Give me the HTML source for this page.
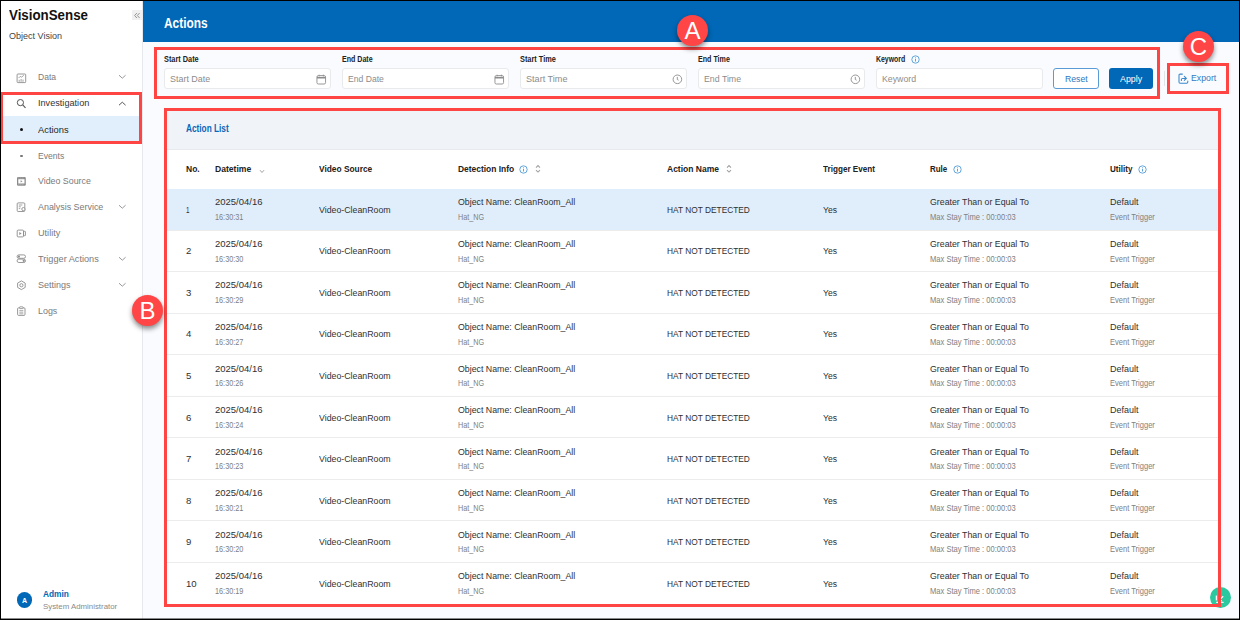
<!DOCTYPE html>
<html><head><meta charset="utf-8"><style>
html,body{margin:0;padding:0;width:1240px;height:620px;overflow:hidden;background:#fff;font-family:"Liberation Sans", sans-serif}
.t{position:absolute;white-space:nowrap;line-height:1}
</style></head><body>
<div style="position:absolute;left:143px;top:42px;width:1097px;height:578px;background:#f9fbfe"></div>
<div style="position:absolute;left:0px;top:0px;width:142px;height:620px;background:#fff"></div>
<div style="position:absolute;left:142px;top:0px;width:1px;height:620px;background:#e6e8eb"></div>
<div style="position:absolute;left:143px;top:0px;width:1097px;height:42px;background:#0068b7"></div>
<div class="t" style="left:164.40px;top:16.00px;font-size:14px;color:#fff;font-weight:700;transform:scaleX(0.8478);transform-origin:0 0;">Actions</div>
<div style="position:absolute;left:132px;top:9.5px;width:10px;height:10.5px;background:#f0f0f0"></div>
<svg style="position:absolute;left:133px;top:11.5px" width="8" height="7" viewBox="0 0 8 7"><path d="M3.9 1 L1.6 3.5 L3.9 6 M6.6 1 L4.3 3.5 L6.6 6" fill="none" stroke="#8c8c8c" stroke-width=".9"/></svg>
<div class="t" style="left:8.90px;top:8.18px;font-size:14.5px;color:#111;font-weight:700;transform:scaleX(0.9188);transform-origin:0 0;">VisionSense</div>
<div class="t" style="left:8.90px;top:31.69px;font-size:8.6px;color:#444;font-weight:400;transform:scaleX(1.0490);transform-origin:0 0;">Object Vision</div>
<div style="position:absolute;left:0px;top:116px;width:142px;height:26px;background:#e1effc"></div>
<div class="t" style="left:37.80px;top:72.42px;font-size:9.5px;color:#7a7a7a;font-weight:400;transform:scaleX(0.9008);transform-origin:0 0;">Data</div>
<svg style="position:absolute;left:118.3px;top:74.4px" width="9" height="6" viewBox="0 0 9 6"><path d="M1 1.2 L4.3 4.2 L7.6 1.2" fill="none" stroke="#999" stroke-width="1"/></svg>
<div class="t" style="left:37.80px;top:98.03px;font-size:9.5px;color:#333333;font-weight:400;transform:scaleX(0.9617);transform-origin:0 0;">Investigation</div>
<svg style="position:absolute;left:118.3px;top:100.70000000000002px" width="9" height="6" viewBox="0 0 9 6"><path d="M1 4.2 L4.3 1.2 L7.6 4.2" fill="none" stroke="#555" stroke-width="1"/></svg>
<div class="t" style="left:37.80px;top:124.82px;font-size:9.5px;color:#262626;font-weight:400;transform:scaleX(0.9820);transform-origin:0 0;">Actions</div>
<div class="t" style="left:37.80px;top:150.72px;font-size:9.5px;color:#7a7a7a;font-weight:400;transform:scaleX(0.9027);transform-origin:0 0;">Events</div>
<div class="t" style="left:37.80px;top:176.32px;font-size:9.5px;color:#7a7a7a;font-weight:400;transform:scaleX(0.9286);transform-origin:0 0;">Video Source</div>
<div class="t" style="left:37.80px;top:202.32px;font-size:9.5px;color:#7a7a7a;font-weight:400;transform:scaleX(0.9371);transform-origin:0 0;">Analysis Service</div>
<svg style="position:absolute;left:118.3px;top:204.29999999999998px" width="9" height="6" viewBox="0 0 9 6"><path d="M1 1.2 L4.3 4.2 L7.6 1.2" fill="none" stroke="#999" stroke-width="1"/></svg>
<div class="t" style="left:37.80px;top:228.12px;font-size:9.5px;color:#7a7a7a;font-weight:400;transform:scaleX(0.9601);transform-origin:0 0;">Utility</div>
<div class="t" style="left:37.80px;top:254.23px;font-size:9.5px;color:#7a7a7a;font-weight:400;transform:scaleX(0.9646);transform-origin:0 0;">Trigger Actions</div>
<svg style="position:absolute;left:118.3px;top:256.2px" width="9" height="6" viewBox="0 0 9 6"><path d="M1 1.2 L4.3 4.2 L7.6 1.2" fill="none" stroke="#999" stroke-width="1"/></svg>
<div class="t" style="left:37.80px;top:280.23px;font-size:9.5px;color:#7a7a7a;font-weight:400;transform:scaleX(0.9493);transform-origin:0 0;">Settings</div>
<svg style="position:absolute;left:118.3px;top:282.2px" width="9" height="6" viewBox="0 0 9 6"><path d="M1 1.2 L4.3 4.2 L7.6 1.2" fill="none" stroke="#999" stroke-width="1"/></svg>
<div class="t" style="left:37.80px;top:306.23px;font-size:9.5px;color:#7a7a7a;font-weight:400;transform:scaleX(0.9362);transform-origin:0 0;">Logs</div>
<div style="position:absolute;left:20.3px;top:127.8px;width:3px;height:3px;background:#111;border-radius:50%"></div>
<div style="position:absolute;left:20.4px;top:154.5px;width:2.6px;height:2.6px;background:#777;border-radius:50%"></div>
<svg style="position:absolute;left:15.9px;top:72.5px" width="11" height="11" viewBox="0 0 11 11"><rect x="1.1" y="1" width="8.6" height="8.6" rx="0.8" fill="none" stroke="#8c8c8c" stroke-width="0.9"/><path d="M2.6 5 L4.2 3.4 L5.6 4.1 L7.8 2.3" fill="none" stroke="#8c8c8c" stroke-width=".8"/><path d="M3.2 8.8V6.8M5.1 8.8V6M7 8.8V6.6" stroke="#8c8c8c" stroke-width=".8"/></svg>
<svg style="position:absolute;left:15.9px;top:98px" width="11" height="11" viewBox="0 0 11 11"><circle cx="4.4" cy="4.6" r="3.1" fill="none" stroke="#555" stroke-width="1"/><path d="M6.7 6.9 L9.5 9.8" stroke="#555" stroke-width="1.1"/></svg>
<svg style="position:absolute;left:15.9px;top:176px" width="11" height="11" viewBox="0 0 11 11"><rect x="1" y="0.9" width="8.8" height="8.9" rx="1.2" fill="#8c8c8c"/><rect x="2.3" y="3.2" width="6.2" height="4.3" fill="#fff"/><path d="M4.6 4.2 L6.5 5.35 L4.6 6.5Z" fill="#8c8c8c"/><path d="M2.5 2H3.3M4.5 2H5.3M6.5 2H7.3M2.5 8.7H3.3M4.5 8.7H5.3M6.5 8.7H7.3" stroke="#ddd" stroke-width=".7"/></svg>
<svg style="position:absolute;left:15.9px;top:202px" width="11" height="11" viewBox="0 0 11 11"><rect x="1.2" y="0.9" width="7.6" height="8.6" rx="0.9" fill="none" stroke="#8c8c8c" stroke-width="0.9"/><path d="M2.8 3H6.3M2.8 4.8H4.8M2.8 6.6H4.2" stroke="#8c8c8c" stroke-width=".8"/><circle cx="7.4" cy="7.1" r="1.6" fill="#fff" stroke="#8c8c8c" stroke-width=".9"/></svg>
<svg style="position:absolute;left:15.9px;top:228.5px" width="11" height="11" viewBox="0 0 11 11"><rect x="1.2" y="1.1" width="6.3" height="6.8" rx="0.9" fill="none" stroke="#8c8c8c" stroke-width="0.9"/><path d="M3.3 2.9 L5.6 4.5 L3.3 6.1Z" fill="#8c8c8c"/><rect x="7.6" y="2.3" width="1.9" height="4.4" rx=".5" fill="none" stroke="#8c8c8c" stroke-width=".8"/></svg>
<svg style="position:absolute;left:15.9px;top:254.2px" width="11" height="11" viewBox="0 0 11 11"><rect x="1.1" y="0.9" width="8.4" height="3.4" rx="1.7" fill="none" stroke="#8c8c8c" stroke-width=".9"/><rect x="1.1" y="5.1" width="8.4" height="3.4" rx="1.7" fill="none" stroke="#8c8c8c" stroke-width=".9"/><circle cx="2.9" cy="2.6" r="1.1" fill="#8c8c8c"/><circle cx="7.7" cy="6.8" r="1.1" fill="#8c8c8c"/></svg>
<svg style="position:absolute;left:15.9px;top:280px" width="11" height="11" viewBox="0 0 11 11"><path d="M5.4 0.9 L9.2 3.1 V7.4 L5.4 9.6 L1.6 7.4 V3.1Z" fill="none" stroke="#8c8c8c" stroke-width=".9" stroke-linejoin="round"/><circle cx="5.4" cy="5.25" r="1.6" fill="none" stroke="#8c8c8c" stroke-width=".9"/></svg>
<svg style="position:absolute;left:15.9px;top:306px" width="11" height="11" viewBox="0 0 11 11"><rect x="1.6" y="1.8" width="7.4" height="7.6" rx="1" fill="none" stroke="#8c8c8c" stroke-width=".9"/><rect x="3.6" y="0.8" width="3.4" height="1.8" rx=".4" fill="#fff" stroke="#8c8c8c" stroke-width=".8"/><path d="M3.3 4.6H7.3M3.3 6.2H7.3M3.3 7.8H7.3" stroke="#8c8c8c" stroke-width=".7"/></svg>
<div style="position:absolute;left:16.5px;top:592.3px;width:15.7px;height:15.7px;background:#0068b7;border-radius:50%"></div>
<div class="t" style="left:22.00px;top:597.04px;font-size:7.6px;color:#fff;font-weight:700;transform:scaleX(0.9320);transform-origin:0 0;">A</div>
<div class="t" style="left:42.60px;top:589.82px;font-size:8.8px;color:#0068b7;font-weight:700;transform:scaleX(0.9464);transform-origin:0 0;">Admin</div>
<div class="t" style="left:42.60px;top:603.21px;font-size:7.4px;color:#8a8a8a;font-weight:400;transform:scaleX(1.0625);transform-origin:0 0;">System Administrator</div>
<div class="t" style="left:164.10px;top:55.12px;font-size:8.8px;color:#222;font-weight:700;transform:scaleX(0.8345);transform-origin:0 0;">Start Date</div>
<div style="position:absolute;left:164px;top:68px;width:167px;height:21px;box-sizing:border-box;background:#fff;border:1px solid #e9eaec;border-radius:3px"></div>
<div class="t" style="left:169.90px;top:74.25px;font-size:9.7px;color:#8c8c8c;font-weight:400;transform:scaleX(0.9233);transform-origin:0 0;">Start Date</div>
<svg style="position:absolute;left:315.5px;top:73.5px" width="11" height="11" viewBox="0 0 11 11"><rect x="0.95" y="1.6" width="8.6" height="8.4" rx="1.4" fill="none" stroke="#8c8c8c" stroke-width=".9"/><path d="M1 3.7H9.5" stroke="#8c8c8c" stroke-width="1.6"/><path d="M3.1 0.7V2.4M7.4 0.7V2.4" stroke="#8c8c8c" stroke-width=".9"/></svg>
<div class="t" style="left:342.10px;top:55.12px;font-size:8.8px;color:#222;font-weight:700;transform:scaleX(0.8021);transform-origin:0 0;">End Date</div>
<div style="position:absolute;left:342px;top:68px;width:167px;height:21px;box-sizing:border-box;background:#fff;border:1px solid #e9eaec;border-radius:3px"></div>
<div class="t" style="left:347.90px;top:74.25px;font-size:9.7px;color:#8c8c8c;font-weight:400;transform:scaleX(0.8875);transform-origin:0 0;">End Date</div>
<svg style="position:absolute;left:493.5px;top:73.5px" width="11" height="11" viewBox="0 0 11 11"><rect x="0.95" y="1.6" width="8.6" height="8.4" rx="1.4" fill="none" stroke="#8c8c8c" stroke-width=".9"/><path d="M1 3.7H9.5" stroke="#8c8c8c" stroke-width="1.6"/><path d="M3.1 0.7V2.4M7.4 0.7V2.4" stroke="#8c8c8c" stroke-width=".9"/></svg>
<div class="t" style="left:520.10px;top:55.12px;font-size:8.8px;color:#222;font-weight:700;transform:scaleX(0.8377);transform-origin:0 0;">Start Time</div>
<div style="position:absolute;left:520px;top:68px;width:167px;height:21px;box-sizing:border-box;background:#fff;border:1px solid #e9eaec;border-radius:3px"></div>
<div class="t" style="left:525.90px;top:74.25px;font-size:9.7px;color:#8c8c8c;font-weight:400;transform:scaleX(0.9393);transform-origin:0 0;">Start Time</div>
<svg style="position:absolute;left:671.5px;top:73.5px" width="11" height="11" viewBox="0 0 11 11"><circle cx="5.4" cy="5.3" r="4.3" fill="none" stroke="#8c8c8c" stroke-width=".9"/><path d="M5.3 2.9V5.5L6.6 6.2" fill="none" stroke="#8c8c8c" stroke-width=".9"/></svg>
<div class="t" style="left:698.10px;top:55.12px;font-size:8.8px;color:#222;font-weight:700;transform:scaleX(0.8082);transform-origin:0 0;">End Time</div>
<div style="position:absolute;left:698px;top:68px;width:167px;height:21px;box-sizing:border-box;background:#fff;border:1px solid #e9eaec;border-radius:3px"></div>
<div class="t" style="left:703.90px;top:74.25px;font-size:9.7px;color:#8c8c8c;font-weight:400;transform:scaleX(0.9053);transform-origin:0 0;">End Time</div>
<svg style="position:absolute;left:849.5px;top:73.5px" width="11" height="11" viewBox="0 0 11 11"><circle cx="5.4" cy="5.3" r="4.3" fill="none" stroke="#8c8c8c" stroke-width=".9"/><path d="M5.3 2.9V5.5L6.6 6.2" fill="none" stroke="#8c8c8c" stroke-width=".9"/></svg>
<div class="t" style="left:875.50px;top:55.12px;font-size:8.8px;color:#222;font-weight:700;transform:scaleX(0.7854);transform-origin:0 0;">Keyword</div>
<svg style="position:absolute;left:910.5px;top:55px" width="9" height="9" viewBox="0 0 9 9"><circle cx="4.5" cy="4.5" r="3.7" fill="none" stroke="#5aa2dc" stroke-width=".95"/><path d="M4.5 3.9V6.5" stroke="#4a98d8" stroke-width=".9"/><circle cx="4.5" cy="2.7" r=".5" fill="#4a98d8"/></svg>
<div style="position:absolute;left:875.5px;top:68px;width:167.5px;height:21px;box-sizing:border-box;background:#fff;border:1px solid #e9eaec;border-radius:3px"></div>
<div class="t" style="left:881.60px;top:73.66px;font-size:9.7px;color:#8c8c8c;font-weight:400;transform:scaleX(0.9037);transform-origin:0 0;">Keyword</div>
<div style="position:absolute;left:1053px;top:68px;width:46px;height:21px;box-sizing:border-box;background:#fff;border:1px solid #5a9bd5;border-radius:3px"></div>
<div class="t" style="left:1064.50px;top:74.21px;font-size:9.4px;color:#2a77bf;font-weight:400;transform:scaleX(0.9252);transform-origin:0 0;">Reset</div>
<div style="position:absolute;left:1108.7px;top:68px;width:44.7px;height:21px;box-sizing:border-box;background:#0068b7;border-radius:3px"></div>
<div class="t" style="left:1120.00px;top:74.01px;font-size:9.4px;color:#fff;font-weight:400;transform:scaleX(0.9447);transform-origin:0 0;">Apply</div>
<div style="position:absolute;left:1164px;top:71px;width:1px;height:15px;background:#e2e4e8"></div>
<svg style="position:absolute;left:1177.6px;top:73px" width="12" height="12" viewBox="0 0 12 12"><path d="M4.4 1.1 H2.1 A1.1 1.1 0 0 0 1 2.2 V9.1 A1.1 1.1 0 0 0 2.1 10.2 H8.7 A1.1 1.1 0 0 0 9.8 9.1 V7.9" fill="none" stroke="#3a88cc" stroke-width="1.05" stroke-linecap="round"/><path d="M3.4 7.4 V6.6 A1.2 1.2 0 0 1 4.6 5.4 H8.3 M6.3 3.4 L8.4 5.4 L6.3 7.4" fill="none" stroke="#3a88cc" stroke-width="1.05" stroke-linecap="round" stroke-linejoin="round"/></svg>
<div class="t" style="left:1190.90px;top:73.31px;font-size:9.4px;color:#2f7cc4;font-weight:400;transform:scaleX(0.9313);transform-origin:0 0;">Export</div>
<div style="position:absolute;left:167px;top:111px;width:1051px;height:493px;background:#fff"></div>
<div style="position:absolute;left:167px;top:111px;width:1051px;height:38px;background:#f0f4f8"></div>
<div style="position:absolute;left:167px;top:149px;width:1051px;height:1px;background:#e6e9ed"></div>
<div class="t" style="left:185.70px;top:124.40px;font-size:10px;color:#0a66b8;font-weight:700;transform:scaleX(0.8267);transform-origin:0 0;">Action List</div>
<div class="t" style="left:185.70px;top:164.34px;font-size:9.6px;color:#222;font-weight:700;transform:scaleX(0.8864);transform-origin:0 0;">No.</div>
<div class="t" style="left:215.40px;top:164.34px;font-size:9.6px;color:#222;font-weight:700;transform:scaleX(0.8950);transform-origin:0 0;">Datetime</div>
<div class="t" style="left:319.40px;top:164.34px;font-size:9.6px;color:#222;font-weight:700;transform:scaleX(0.8709);transform-origin:0 0;">Video Source</div>
<div class="t" style="left:457.70px;top:164.34px;font-size:9.6px;color:#222;font-weight:700;transform:scaleX(0.8783);transform-origin:0 0;">Detection Info</div>
<div class="t" style="left:666.90px;top:164.34px;font-size:9.6px;color:#222;font-weight:700;transform:scaleX(0.8865);transform-origin:0 0;">Action Name</div>
<div class="t" style="left:822.90px;top:164.34px;font-size:9.6px;color:#222;font-weight:700;transform:scaleX(0.8477);transform-origin:0 0;">Trigger Event</div>
<div class="t" style="left:929.90px;top:164.34px;font-size:9.6px;color:#222;font-weight:700;transform:scaleX(0.8276);transform-origin:0 0;">Rule</div>
<div class="t" style="left:1110.40px;top:164.34px;font-size:9.6px;color:#222;font-weight:700;transform:scaleX(0.8431);transform-origin:0 0;">Utility</div>
<svg style="position:absolute;left:519px;top:164.7px" width="9" height="9" viewBox="0 0 9 9"><circle cx="4.5" cy="4.5" r="3.7" fill="none" stroke="#5aa2dc" stroke-width=".95"/><path d="M4.5 3.9V6.5" stroke="#4a98d8" stroke-width=".9"/><circle cx="4.5" cy="2.7" r=".5" fill="#4a98d8"/></svg>
<svg style="position:absolute;left:535px;top:164px" width="7" height="10" viewBox="0 0 7 10"><path d="M1 3.6 L3 1.6 L5 3.6 M1 6.1 L3 8.1 L5 6.1" fill="none" stroke="#a0a0a0" stroke-width="1.05"/></svg>
<svg style="position:absolute;left:726px;top:164px" width="7" height="10" viewBox="0 0 7 10"><path d="M1 3.6 L3 1.6 L5 3.6 M1 6.1 L3 8.1 L5 6.1" fill="none" stroke="#a0a0a0" stroke-width="1.05"/></svg>
<svg style="position:absolute;left:952.5px;top:164.7px" width="9" height="9" viewBox="0 0 9 9"><circle cx="4.5" cy="4.5" r="3.7" fill="none" stroke="#5aa2dc" stroke-width=".95"/><path d="M4.5 3.9V6.5" stroke="#4a98d8" stroke-width=".9"/><circle cx="4.5" cy="2.7" r=".5" fill="#4a98d8"/></svg>
<svg style="position:absolute;left:1138.2px;top:164.7px" width="9" height="9" viewBox="0 0 9 9"><circle cx="4.5" cy="4.5" r="3.7" fill="none" stroke="#5aa2dc" stroke-width=".95"/><path d="M4.5 3.9V6.5" stroke="#4a98d8" stroke-width=".9"/><circle cx="4.5" cy="2.7" r=".5" fill="#4a98d8"/></svg>
<svg style="position:absolute;left:258.5px;top:168.5px" width="6" height="5" viewBox="0 0 6 5"><path d="M1 1.2 L3 3.5 L5 1.2" fill="none" stroke="#999" stroke-width=".9"/></svg>
<div style="position:absolute;left:167px;top:188.5px;width:1051px;height:41.55px;background:#e0eefc"></div>
<div class="t" style="left:185.90px;top:204.84px;font-size:9.6px;color:#303030;font-weight:400;transform:scaleX(0.6569);transform-origin:0 0;">1</div>
<div class="t" style="left:215.40px;top:197.35px;font-size:9.7px;color:#303030;font-weight:400;transform:scaleX(0.9784);transform-origin:0 0;">2025/04/16</div>
<div class="t" style="left:215.40px;top:212.96px;font-size:8.4px;color:#808080;font-weight:400;transform:scaleX(0.8711);transform-origin:0 0;">16:30:31</div>
<div class="t" style="left:319.40px;top:204.75px;font-size:9.7px;color:#303030;font-weight:400;transform:scaleX(0.9064);transform-origin:0 0;">Video-CleanRoom</div>
<div class="t" style="left:457.60px;top:197.35px;font-size:9.7px;color:#303030;font-weight:400;transform:scaleX(0.9073);transform-origin:0 0;">Object Name: CleanRoom_All</div>
<div class="t" style="left:457.60px;top:212.96px;font-size:8.4px;color:#808080;font-weight:400;transform:scaleX(0.8640);transform-origin:0 0;">Hat_NG</div>
<div class="t" style="left:666.90px;top:204.75px;font-size:9.7px;color:#303030;font-weight:400;transform:scaleX(0.8604);transform-origin:0 0;">HAT NOT DETECTED</div>
<div class="t" style="left:822.90px;top:204.75px;font-size:9.7px;color:#303030;font-weight:400;transform:scaleX(0.8855);transform-origin:0 0;">Yes</div>
<div class="t" style="left:929.90px;top:197.35px;font-size:9.7px;color:#303030;font-weight:400;transform:scaleX(0.9072);transform-origin:0 0;">Greater Than or Equal To</div>
<div class="t" style="left:929.90px;top:212.96px;font-size:8.4px;color:#808080;font-weight:400;transform:scaleX(0.9028);transform-origin:0 0;">Max Stay Time : 00:00:03</div>
<div class="t" style="left:1110.40px;top:197.35px;font-size:9.7px;color:#303030;font-weight:400;transform:scaleX(0.9269);transform-origin:0 0;">Default</div>
<div class="t" style="left:1110.40px;top:212.96px;font-size:8.4px;color:#808080;font-weight:400;transform:scaleX(0.9004);transform-origin:0 0;">Event Trigger</div>
<div style="position:absolute;left:167px;top:229.55px;width:1051px;height:1px;background:#ececec"></div>
<div class="t" style="left:185.90px;top:246.39px;font-size:9.6px;color:#303030;font-weight:400;">2</div>
<div class="t" style="left:215.40px;top:238.91px;font-size:9.7px;color:#303030;font-weight:400;transform:scaleX(0.9784);transform-origin:0 0;">2025/04/16</div>
<div class="t" style="left:215.40px;top:254.51px;font-size:8.4px;color:#808080;font-weight:400;transform:scaleX(0.8711);transform-origin:0 0;">16:30:30</div>
<div class="t" style="left:319.40px;top:246.31px;font-size:9.7px;color:#303030;font-weight:400;transform:scaleX(0.9064);transform-origin:0 0;">Video-CleanRoom</div>
<div class="t" style="left:457.60px;top:238.91px;font-size:9.7px;color:#303030;font-weight:400;transform:scaleX(0.9073);transform-origin:0 0;">Object Name: CleanRoom_All</div>
<div class="t" style="left:457.60px;top:254.51px;font-size:8.4px;color:#808080;font-weight:400;transform:scaleX(0.8640);transform-origin:0 0;">Hat_NG</div>
<div class="t" style="left:666.90px;top:246.31px;font-size:9.7px;color:#303030;font-weight:400;transform:scaleX(0.8604);transform-origin:0 0;">HAT NOT DETECTED</div>
<div class="t" style="left:822.90px;top:246.31px;font-size:9.7px;color:#303030;font-weight:400;transform:scaleX(0.8855);transform-origin:0 0;">Yes</div>
<div class="t" style="left:929.90px;top:238.91px;font-size:9.7px;color:#303030;font-weight:400;transform:scaleX(0.9072);transform-origin:0 0;">Greater Than or Equal To</div>
<div class="t" style="left:929.90px;top:254.51px;font-size:8.4px;color:#808080;font-weight:400;transform:scaleX(0.9028);transform-origin:0 0;">Max Stay Time : 00:00:03</div>
<div class="t" style="left:1110.40px;top:238.91px;font-size:9.7px;color:#303030;font-weight:400;transform:scaleX(0.9269);transform-origin:0 0;">Default</div>
<div class="t" style="left:1110.40px;top:254.51px;font-size:8.4px;color:#808080;font-weight:400;transform:scaleX(0.9004);transform-origin:0 0;">Event Trigger</div>
<div style="position:absolute;left:167px;top:271.1px;width:1051px;height:1px;background:#ececec"></div>
<div class="t" style="left:185.90px;top:287.94px;font-size:9.6px;color:#303030;font-weight:400;">3</div>
<div class="t" style="left:215.40px;top:280.45px;font-size:9.7px;color:#303030;font-weight:400;transform:scaleX(0.9784);transform-origin:0 0;">2025/04/16</div>
<div class="t" style="left:215.40px;top:296.06px;font-size:8.4px;color:#808080;font-weight:400;transform:scaleX(0.8711);transform-origin:0 0;">16:30:29</div>
<div class="t" style="left:319.40px;top:287.86px;font-size:9.7px;color:#303030;font-weight:400;transform:scaleX(0.9064);transform-origin:0 0;">Video-CleanRoom</div>
<div class="t" style="left:457.60px;top:280.45px;font-size:9.7px;color:#303030;font-weight:400;transform:scaleX(0.9073);transform-origin:0 0;">Object Name: CleanRoom_All</div>
<div class="t" style="left:457.60px;top:296.06px;font-size:8.4px;color:#808080;font-weight:400;transform:scaleX(0.8640);transform-origin:0 0;">Hat_NG</div>
<div class="t" style="left:666.90px;top:287.86px;font-size:9.7px;color:#303030;font-weight:400;transform:scaleX(0.8604);transform-origin:0 0;">HAT NOT DETECTED</div>
<div class="t" style="left:822.90px;top:287.86px;font-size:9.7px;color:#303030;font-weight:400;transform:scaleX(0.8855);transform-origin:0 0;">Yes</div>
<div class="t" style="left:929.90px;top:280.45px;font-size:9.7px;color:#303030;font-weight:400;transform:scaleX(0.9072);transform-origin:0 0;">Greater Than or Equal To</div>
<div class="t" style="left:929.90px;top:296.06px;font-size:8.4px;color:#808080;font-weight:400;transform:scaleX(0.9028);transform-origin:0 0;">Max Stay Time : 00:00:03</div>
<div class="t" style="left:1110.40px;top:280.45px;font-size:9.7px;color:#303030;font-weight:400;transform:scaleX(0.9269);transform-origin:0 0;">Default</div>
<div class="t" style="left:1110.40px;top:296.06px;font-size:8.4px;color:#808080;font-weight:400;transform:scaleX(0.9004);transform-origin:0 0;">Event Trigger</div>
<div style="position:absolute;left:167px;top:312.65px;width:1051px;height:1px;background:#ececec"></div>
<div class="t" style="left:185.90px;top:329.49px;font-size:9.6px;color:#303030;font-weight:400;">4</div>
<div class="t" style="left:215.40px;top:322.00px;font-size:9.7px;color:#303030;font-weight:400;transform:scaleX(0.9784);transform-origin:0 0;">2025/04/16</div>
<div class="t" style="left:215.40px;top:337.61px;font-size:8.4px;color:#808080;font-weight:400;transform:scaleX(0.8711);transform-origin:0 0;">16:30:27</div>
<div class="t" style="left:319.40px;top:329.40px;font-size:9.7px;color:#303030;font-weight:400;transform:scaleX(0.9064);transform-origin:0 0;">Video-CleanRoom</div>
<div class="t" style="left:457.60px;top:322.00px;font-size:9.7px;color:#303030;font-weight:400;transform:scaleX(0.9073);transform-origin:0 0;">Object Name: CleanRoom_All</div>
<div class="t" style="left:457.60px;top:337.61px;font-size:8.4px;color:#808080;font-weight:400;transform:scaleX(0.8640);transform-origin:0 0;">Hat_NG</div>
<div class="t" style="left:666.90px;top:329.40px;font-size:9.7px;color:#303030;font-weight:400;transform:scaleX(0.8604);transform-origin:0 0;">HAT NOT DETECTED</div>
<div class="t" style="left:822.90px;top:329.40px;font-size:9.7px;color:#303030;font-weight:400;transform:scaleX(0.8855);transform-origin:0 0;">Yes</div>
<div class="t" style="left:929.90px;top:322.00px;font-size:9.7px;color:#303030;font-weight:400;transform:scaleX(0.9072);transform-origin:0 0;">Greater Than or Equal To</div>
<div class="t" style="left:929.90px;top:337.61px;font-size:8.4px;color:#808080;font-weight:400;transform:scaleX(0.9028);transform-origin:0 0;">Max Stay Time : 00:00:03</div>
<div class="t" style="left:1110.40px;top:322.00px;font-size:9.7px;color:#303030;font-weight:400;transform:scaleX(0.9269);transform-origin:0 0;">Default</div>
<div class="t" style="left:1110.40px;top:337.61px;font-size:8.4px;color:#808080;font-weight:400;transform:scaleX(0.9004);transform-origin:0 0;">Event Trigger</div>
<div style="position:absolute;left:167px;top:354.2px;width:1051px;height:1px;background:#ececec"></div>
<div class="t" style="left:185.90px;top:371.04px;font-size:9.6px;color:#303030;font-weight:400;">5</div>
<div class="t" style="left:215.40px;top:363.55px;font-size:9.7px;color:#303030;font-weight:400;transform:scaleX(0.9784);transform-origin:0 0;">2025/04/16</div>
<div class="t" style="left:215.40px;top:379.16px;font-size:8.4px;color:#808080;font-weight:400;transform:scaleX(0.8711);transform-origin:0 0;">16:30:26</div>
<div class="t" style="left:319.40px;top:370.95px;font-size:9.7px;color:#303030;font-weight:400;transform:scaleX(0.9064);transform-origin:0 0;">Video-CleanRoom</div>
<div class="t" style="left:457.60px;top:363.55px;font-size:9.7px;color:#303030;font-weight:400;transform:scaleX(0.9073);transform-origin:0 0;">Object Name: CleanRoom_All</div>
<div class="t" style="left:457.60px;top:379.16px;font-size:8.4px;color:#808080;font-weight:400;transform:scaleX(0.8640);transform-origin:0 0;">Hat_NG</div>
<div class="t" style="left:666.90px;top:370.95px;font-size:9.7px;color:#303030;font-weight:400;transform:scaleX(0.8604);transform-origin:0 0;">HAT NOT DETECTED</div>
<div class="t" style="left:822.90px;top:370.95px;font-size:9.7px;color:#303030;font-weight:400;transform:scaleX(0.8855);transform-origin:0 0;">Yes</div>
<div class="t" style="left:929.90px;top:363.55px;font-size:9.7px;color:#303030;font-weight:400;transform:scaleX(0.9072);transform-origin:0 0;">Greater Than or Equal To</div>
<div class="t" style="left:929.90px;top:379.16px;font-size:8.4px;color:#808080;font-weight:400;transform:scaleX(0.9028);transform-origin:0 0;">Max Stay Time : 00:00:03</div>
<div class="t" style="left:1110.40px;top:363.55px;font-size:9.7px;color:#303030;font-weight:400;transform:scaleX(0.9269);transform-origin:0 0;">Default</div>
<div class="t" style="left:1110.40px;top:379.16px;font-size:8.4px;color:#808080;font-weight:400;transform:scaleX(0.9004);transform-origin:0 0;">Event Trigger</div>
<div style="position:absolute;left:167px;top:395.75px;width:1051px;height:1px;background:#ececec"></div>
<div class="t" style="left:185.90px;top:412.59px;font-size:9.6px;color:#303030;font-weight:400;">6</div>
<div class="t" style="left:215.40px;top:405.10px;font-size:9.7px;color:#303030;font-weight:400;transform:scaleX(0.9784);transform-origin:0 0;">2025/04/16</div>
<div class="t" style="left:215.40px;top:420.71px;font-size:8.4px;color:#808080;font-weight:400;transform:scaleX(0.8711);transform-origin:0 0;">16:30:24</div>
<div class="t" style="left:319.40px;top:412.50px;font-size:9.7px;color:#303030;font-weight:400;transform:scaleX(0.9064);transform-origin:0 0;">Video-CleanRoom</div>
<div class="t" style="left:457.60px;top:405.10px;font-size:9.7px;color:#303030;font-weight:400;transform:scaleX(0.9073);transform-origin:0 0;">Object Name: CleanRoom_All</div>
<div class="t" style="left:457.60px;top:420.71px;font-size:8.4px;color:#808080;font-weight:400;transform:scaleX(0.8640);transform-origin:0 0;">Hat_NG</div>
<div class="t" style="left:666.90px;top:412.50px;font-size:9.7px;color:#303030;font-weight:400;transform:scaleX(0.8604);transform-origin:0 0;">HAT NOT DETECTED</div>
<div class="t" style="left:822.90px;top:412.50px;font-size:9.7px;color:#303030;font-weight:400;transform:scaleX(0.8855);transform-origin:0 0;">Yes</div>
<div class="t" style="left:929.90px;top:405.10px;font-size:9.7px;color:#303030;font-weight:400;transform:scaleX(0.9072);transform-origin:0 0;">Greater Than or Equal To</div>
<div class="t" style="left:929.90px;top:420.71px;font-size:8.4px;color:#808080;font-weight:400;transform:scaleX(0.9028);transform-origin:0 0;">Max Stay Time : 00:00:03</div>
<div class="t" style="left:1110.40px;top:405.10px;font-size:9.7px;color:#303030;font-weight:400;transform:scaleX(0.9269);transform-origin:0 0;">Default</div>
<div class="t" style="left:1110.40px;top:420.71px;font-size:8.4px;color:#808080;font-weight:400;transform:scaleX(0.9004);transform-origin:0 0;">Event Trigger</div>
<div style="position:absolute;left:167px;top:437.29999999999995px;width:1051px;height:1px;background:#ececec"></div>
<div class="t" style="left:185.90px;top:454.14px;font-size:9.6px;color:#303030;font-weight:400;">7</div>
<div class="t" style="left:215.40px;top:446.65px;font-size:9.7px;color:#303030;font-weight:400;transform:scaleX(0.9784);transform-origin:0 0;">2025/04/16</div>
<div class="t" style="left:215.40px;top:462.26px;font-size:8.4px;color:#808080;font-weight:400;transform:scaleX(0.8711);transform-origin:0 0;">16:30:23</div>
<div class="t" style="left:319.40px;top:454.05px;font-size:9.7px;color:#303030;font-weight:400;transform:scaleX(0.9064);transform-origin:0 0;">Video-CleanRoom</div>
<div class="t" style="left:457.60px;top:446.65px;font-size:9.7px;color:#303030;font-weight:400;transform:scaleX(0.9073);transform-origin:0 0;">Object Name: CleanRoom_All</div>
<div class="t" style="left:457.60px;top:462.26px;font-size:8.4px;color:#808080;font-weight:400;transform:scaleX(0.8640);transform-origin:0 0;">Hat_NG</div>
<div class="t" style="left:666.90px;top:454.05px;font-size:9.7px;color:#303030;font-weight:400;transform:scaleX(0.8604);transform-origin:0 0;">HAT NOT DETECTED</div>
<div class="t" style="left:822.90px;top:454.05px;font-size:9.7px;color:#303030;font-weight:400;transform:scaleX(0.8855);transform-origin:0 0;">Yes</div>
<div class="t" style="left:929.90px;top:446.65px;font-size:9.7px;color:#303030;font-weight:400;transform:scaleX(0.9072);transform-origin:0 0;">Greater Than or Equal To</div>
<div class="t" style="left:929.90px;top:462.26px;font-size:8.4px;color:#808080;font-weight:400;transform:scaleX(0.9028);transform-origin:0 0;">Max Stay Time : 00:00:03</div>
<div class="t" style="left:1110.40px;top:446.65px;font-size:9.7px;color:#303030;font-weight:400;transform:scaleX(0.9269);transform-origin:0 0;">Default</div>
<div class="t" style="left:1110.40px;top:462.26px;font-size:8.4px;color:#808080;font-weight:400;transform:scaleX(0.9004);transform-origin:0 0;">Event Trigger</div>
<div style="position:absolute;left:167px;top:478.84999999999997px;width:1051px;height:1px;background:#ececec"></div>
<div class="t" style="left:185.90px;top:495.69px;font-size:9.6px;color:#303030;font-weight:400;">8</div>
<div class="t" style="left:215.40px;top:488.20px;font-size:9.7px;color:#303030;font-weight:400;transform:scaleX(0.9784);transform-origin:0 0;">2025/04/16</div>
<div class="t" style="left:215.40px;top:503.81px;font-size:8.4px;color:#808080;font-weight:400;transform:scaleX(0.8711);transform-origin:0 0;">16:30:21</div>
<div class="t" style="left:319.40px;top:495.60px;font-size:9.7px;color:#303030;font-weight:400;transform:scaleX(0.9064);transform-origin:0 0;">Video-CleanRoom</div>
<div class="t" style="left:457.60px;top:488.20px;font-size:9.7px;color:#303030;font-weight:400;transform:scaleX(0.9073);transform-origin:0 0;">Object Name: CleanRoom_All</div>
<div class="t" style="left:457.60px;top:503.81px;font-size:8.4px;color:#808080;font-weight:400;transform:scaleX(0.8640);transform-origin:0 0;">Hat_NG</div>
<div class="t" style="left:666.90px;top:495.60px;font-size:9.7px;color:#303030;font-weight:400;transform:scaleX(0.8604);transform-origin:0 0;">HAT NOT DETECTED</div>
<div class="t" style="left:822.90px;top:495.60px;font-size:9.7px;color:#303030;font-weight:400;transform:scaleX(0.8855);transform-origin:0 0;">Yes</div>
<div class="t" style="left:929.90px;top:488.20px;font-size:9.7px;color:#303030;font-weight:400;transform:scaleX(0.9072);transform-origin:0 0;">Greater Than or Equal To</div>
<div class="t" style="left:929.90px;top:503.81px;font-size:8.4px;color:#808080;font-weight:400;transform:scaleX(0.9028);transform-origin:0 0;">Max Stay Time : 00:00:03</div>
<div class="t" style="left:1110.40px;top:488.20px;font-size:9.7px;color:#303030;font-weight:400;transform:scaleX(0.9269);transform-origin:0 0;">Default</div>
<div class="t" style="left:1110.40px;top:503.81px;font-size:8.4px;color:#808080;font-weight:400;transform:scaleX(0.9004);transform-origin:0 0;">Event Trigger</div>
<div style="position:absolute;left:167px;top:520.4px;width:1051px;height:1px;background:#ececec"></div>
<div class="t" style="left:185.90px;top:537.24px;font-size:9.6px;color:#303030;font-weight:400;">9</div>
<div class="t" style="left:215.40px;top:529.75px;font-size:9.7px;color:#303030;font-weight:400;transform:scaleX(0.9784);transform-origin:0 0;">2025/04/16</div>
<div class="t" style="left:215.40px;top:545.36px;font-size:8.4px;color:#808080;font-weight:400;transform:scaleX(0.8711);transform-origin:0 0;">16:30:20</div>
<div class="t" style="left:319.40px;top:537.15px;font-size:9.7px;color:#303030;font-weight:400;transform:scaleX(0.9064);transform-origin:0 0;">Video-CleanRoom</div>
<div class="t" style="left:457.60px;top:529.75px;font-size:9.7px;color:#303030;font-weight:400;transform:scaleX(0.9073);transform-origin:0 0;">Object Name: CleanRoom_All</div>
<div class="t" style="left:457.60px;top:545.36px;font-size:8.4px;color:#808080;font-weight:400;transform:scaleX(0.8640);transform-origin:0 0;">Hat_NG</div>
<div class="t" style="left:666.90px;top:537.15px;font-size:9.7px;color:#303030;font-weight:400;transform:scaleX(0.8604);transform-origin:0 0;">HAT NOT DETECTED</div>
<div class="t" style="left:822.90px;top:537.15px;font-size:9.7px;color:#303030;font-weight:400;transform:scaleX(0.8855);transform-origin:0 0;">Yes</div>
<div class="t" style="left:929.90px;top:529.75px;font-size:9.7px;color:#303030;font-weight:400;transform:scaleX(0.9072);transform-origin:0 0;">Greater Than or Equal To</div>
<div class="t" style="left:929.90px;top:545.36px;font-size:8.4px;color:#808080;font-weight:400;transform:scaleX(0.9028);transform-origin:0 0;">Max Stay Time : 00:00:03</div>
<div class="t" style="left:1110.40px;top:529.75px;font-size:9.7px;color:#303030;font-weight:400;transform:scaleX(0.9269);transform-origin:0 0;">Default</div>
<div class="t" style="left:1110.40px;top:545.36px;font-size:8.4px;color:#808080;font-weight:400;transform:scaleX(0.9004);transform-origin:0 0;">Event Trigger</div>
<div style="position:absolute;left:167px;top:561.95px;width:1051px;height:1px;background:#ececec"></div>
<div class="t" style="left:185.90px;top:578.79px;font-size:9.6px;color:#303030;font-weight:400;">10</div>
<div class="t" style="left:215.40px;top:571.31px;font-size:9.7px;color:#303030;font-weight:400;transform:scaleX(0.9784);transform-origin:0 0;">2025/04/16</div>
<div class="t" style="left:215.40px;top:586.91px;font-size:8.4px;color:#808080;font-weight:400;transform:scaleX(0.8711);transform-origin:0 0;">16:30:19</div>
<div class="t" style="left:319.40px;top:578.71px;font-size:9.7px;color:#303030;font-weight:400;transform:scaleX(0.9064);transform-origin:0 0;">Video-CleanRoom</div>
<div class="t" style="left:457.60px;top:571.31px;font-size:9.7px;color:#303030;font-weight:400;transform:scaleX(0.9073);transform-origin:0 0;">Object Name: CleanRoom_All</div>
<div class="t" style="left:457.60px;top:586.91px;font-size:8.4px;color:#808080;font-weight:400;transform:scaleX(0.8640);transform-origin:0 0;">Hat_NG</div>
<div class="t" style="left:666.90px;top:578.71px;font-size:9.7px;color:#303030;font-weight:400;transform:scaleX(0.8604);transform-origin:0 0;">HAT NOT DETECTED</div>
<div class="t" style="left:822.90px;top:578.71px;font-size:9.7px;color:#303030;font-weight:400;transform:scaleX(0.8855);transform-origin:0 0;">Yes</div>
<div class="t" style="left:929.90px;top:571.31px;font-size:9.7px;color:#303030;font-weight:400;transform:scaleX(0.9072);transform-origin:0 0;">Greater Than or Equal To</div>
<div class="t" style="left:929.90px;top:586.91px;font-size:8.4px;color:#808080;font-weight:400;transform:scaleX(0.9028);transform-origin:0 0;">Max Stay Time : 00:00:03</div>
<div class="t" style="left:1110.40px;top:571.31px;font-size:9.7px;color:#303030;font-weight:400;transform:scaleX(0.9269);transform-origin:0 0;">Default</div>
<div class="t" style="left:1110.40px;top:586.91px;font-size:8.4px;color:#808080;font-weight:400;transform:scaleX(0.9004);transform-origin:0 0;">Event Trigger</div>
<div style="position:absolute;left:1209.8px;top:587.3px;width:21px;height:21px;background:#2cc9a0;border-radius:50%"></div>
<svg style="position:absolute;left:1209.3px;top:586.8px" width="22" height="22" viewBox="0 0 22 22"><path d="M14.2 9.2 L9.6 13.6 M9.6 10.4 V13.6 H12.8 M7.2 15.4 H14.6" fill="none" stroke="#fff" stroke-width="1.3"/><path d="M7.4 8.6 V13.4" stroke="#fff" stroke-width="1.3"/></svg>
<div style="position:absolute;left:0px;top:92px;width:142px;height:52px;box-sizing:border-box;border:3px solid #ff4444"></div>
<div style="position:absolute;left:154px;top:47px;width:1006px;height:52px;box-sizing:border-box;border:3px solid #ff4444"></div>
<div style="position:absolute;left:1167px;top:63px;width:62px;height:31px;box-sizing:border-box;border:3px solid #ff4444"></div>
<div style="position:absolute;left:164px;top:108px;width:1057px;height:499px;box-sizing:border-box;border:3px solid #ff4444"></div>
<div style="position:absolute;left:677.0px;top:15.0px;width:31px;height:31px;border-radius:50%;background:#ff4545;box-shadow:0 3px 5px rgba(0,0,0,.45);color:#fff;font-size:24px;line-height:31px;text-align:center">A</div>
<div style="position:absolute;left:132.0px;top:295.0px;width:31px;height:31px;border-radius:50%;background:#ff4545;box-shadow:0 3px 5px rgba(0,0,0,.45);color:#fff;font-size:24px;line-height:31px;text-align:center">B</div>
<div style="position:absolute;left:1183.0px;top:31.0px;width:31px;height:31px;border-radius:50%;background:#ff4545;box-shadow:0 3px 5px rgba(0,0,0,.45);color:#fff;font-size:24px;line-height:31px;text-align:center">C</div>
<div style="position:absolute;left:0px;top:0px;width:1240px;height:620px;box-sizing:border-box;border-style:solid;border-color:#000;border-width:1px 1px 1px 1px;pointer-events:none"></div>
<div style="position:absolute;left:0px;top:618px;width:1240px;height:1px;background:rgba(0,0,0,.45)"></div>
</body></html>
